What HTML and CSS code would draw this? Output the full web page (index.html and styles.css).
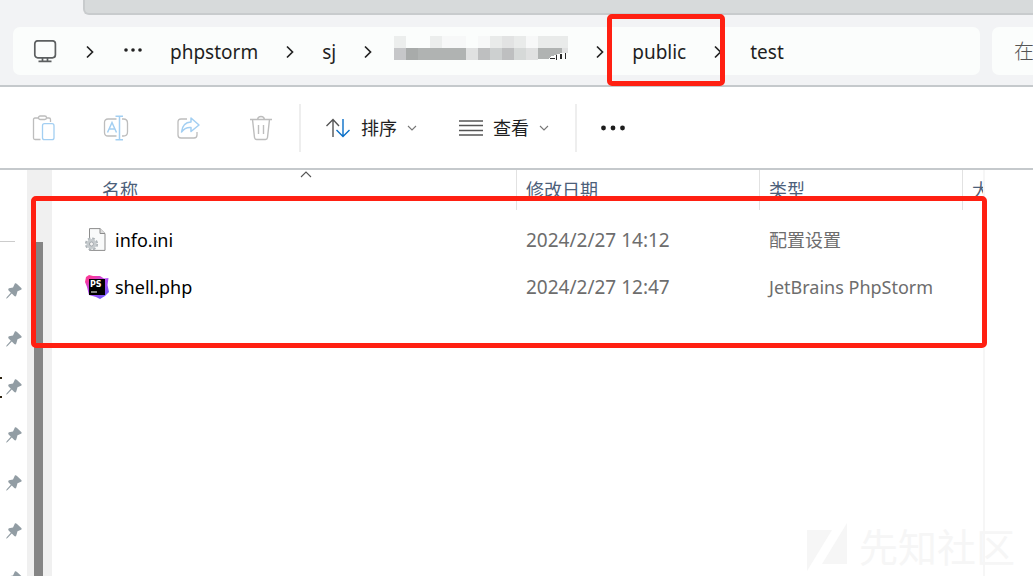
FILE: index.html
```html
<!DOCTYPE html>
<html lang="zh-CN">
<head>
<meta charset="utf-8">
<title>test</title>
<link rel="stylesheet" href="styles.css">
</head>
<body>
<svg class="defs" aria-hidden="true">
  <symbol id="next" viewBox="0 0 8 14"><path d="M1 1.5L6.5 7L1 12.5" fill="none" stroke="#222" stroke-width="1.7"/></symbol>
  <symbol id="down" viewBox="0 0 10 6"><path d="M1 1L5 5L9 1" fill="none" stroke="#777" stroke-width="1.1"/></symbol>
  <symbol id="pin" viewBox="0 0 16 16"><path d="M9 0.3Q10 0 11 1L15.5 5.2Q16 6.2 15 6.8L11.5 8.3L10.3 12.5Q9.6 14 8.3 13L5.8 10.6L1.5 15L0 15.8L0.7 14.2L4.8 9.8L2.4 7.2Q1.8 6 3 5.3L7 4.4Z" fill="#929da4"/></symbol>
</svg>
<div class="explorer">
  <div class="tabs"><div class="tab-strip"></div></div>
  <header class="address-row">
    <nav class="address" aria-label="地址">
      <button class="plain" aria-label="此电脑"><svg width="24" height="24" viewBox="0 0 24 24" fill="none" stroke="#5c5f60" stroke-width="1.7"><rect x="1.8" y="0.8" width="20.6" height="17" rx="3"/><path d="M9.5 18v3M14.5 18v3M5.5 21.3h13"/></svg></button>
      <svg class="next"><use href="#next"/></svg>
      <button class="plain" aria-label="更多路径"><svg width="20" height="20" viewBox="0 0 20 20" fill="#222"><circle cx="4" cy="8" r="1.8"/><circle cx="11" cy="8" r="1.8"/><circle cx="18" cy="8" r="1.8"/></svg></button>
      <a href="#">phpstorm</a>
      <svg class="next"><use href="#next"/></svg>
      <a href="#">sj</a>
      <svg class="next"><use href="#next"/></svg>
      <a href="#" class="hidden-name" aria-label="文件夹"><svg class="mosaic" width="174" height="24" viewBox="0 0 174 24" shape-rendering="crispEdges">
        <path d="M0 0h12v12H0zM36 0h12v12H36z" fill="#eceeed"/>
        <path d="M48 0h24v12H48zM84 0h12v12H84zM132 0h12v12h-12z" fill="#f7f8f8"/>
        <path d="M96 0h12v12H96zM120 0h12v12h-12zM144 0h30v12h-30z" fill="#e9ebea"/>
        <path d="M108 0h12v12h-12z" fill="#e2e3e3"/>
        <path d="M0 12h12v12H0z" fill="#c6c7c9"/>
        <path d="M12 12h12v12H12z" fill="#a8abaa"/>
        <path d="M24 12h48v12H24zM144 12h24v5l-10 3l-4 3h-10z" fill="#b0b3b2"/>
        <path d="M72 12h12v12H72zM132 12h12v12h-12zM168 12h6v5h-6z" fill="#e0e1e1"/>
        <path d="M84 12h12v12H84zM108 12h12v12h-12z" fill="#bebfc0"/>
        <path d="M96 12h12v12H96z" fill="#cdd0d0"/>
        <path d="M120 12h12v12h-12z" fill="#d6d9d8"/>
        <path d="M156 22h5v1h-5zM162 19h1v5h-1zM166 18h2v5h-2zM171 17h1v6h-1z" fill="#292929"/>
      </svg></a>
      <svg class="next"><use href="#next"/></svg>
      <a href="#">public</a>
      <svg class="next"><use href="#next"/></svg>
      <a href="#">test</a>
    </nav>
    <button class="search">在</button>
  </header>

  <div class="toolbar">
    <div class="group edit">
      <button class="plain" aria-label="粘贴"><svg width="24" height="26" viewBox="0 0 24 26" fill="none" stroke="#bdbdbd" stroke-width="1.3"><path d="M6.5 3H3Q1.5 3 1.5 4.5V23Q1.5 24.5 3 24.5H8.5M14.5 3H17Q18.5 3 18.5 4.5V7"/><rect x="6.5" y="1" width="8" height="3.5" rx="1.7"/><rect x="10.5" y="8.7" width="11.5" height="16" rx="2" stroke="#a3cff2"/></svg></button>
      <button class="plain" aria-label="重命名"><svg width="26" height="26" viewBox="0 0 26 26" fill="none" stroke="#bdbdbd" stroke-width="1.3"><path d="M13.5 4H5Q1.5 4 1.5 7.5V17.5Q1.5 21 5 21H13.5M19 4H20.5Q24.5 4 24.5 8V17Q24.5 21 20.5 21H19"/><path d="M4.5 17.5L9 7.5L13.5 17.5M6 14H12M16.5 1.5V24.5M12.5 1.3H20M12.5 24.7H20" stroke="#a3cff2" stroke-width="1.5"/></svg></button>
      <button class="plain" aria-label="共享"><svg width="26" height="26" viewBox="0 0 26 26" fill="none" stroke="#bdbdbd" stroke-width="1.3"><path d="M11 4H5Q2 4 2 7V20Q2 23 5 23H18Q21 23 21 20V17"/><path d="M15 3L23 10L15 16.5V12.5Q9 12 5.5 17Q6.5 7.5 15 7Z" stroke="#a3cff2" stroke-linejoin="round" stroke-width="1.5"/></svg></button>
      <button class="plain" aria-label="删除"><svg width="24" height="26" viewBox="0 0 24 26" fill="none" stroke="#bdbdbd" stroke-width="1.4"><path d="M1 4.5H23M8.5 4.5Q9 1.5 12 1.5T15.5 4.5M3.5 4.5L5.5 22.5Q5.8 24.5 7.5 24.5H16.5Q18.2 24.5 18.5 22.5L20.5 4.5M9.5 10V19M14.5 10V19"/></svg></button>
    </div>
    <div class="group menus">
      <button class="plain menu"><svg width="26" height="20" viewBox="0 0 26 20" fill="none" stroke-width="1.4"><path d="M8 19V1.5M1.5 8L8 1.5L14 8" stroke="#555"/><path d="M18 1V18.5M11.5 12L18 18.5L24.5 12" stroke="#0a6fc8"/></svg><span>排序</span><svg class="down"><use href="#down"/></svg></button>
      <button class="plain menu"><svg width="24" height="16" viewBox="0 0 24 16" stroke="#555" stroke-width="1.3"><path d="M0 1H24M0 5.5H24M0 10.5H24M0 15H24"/></svg><span>查看</span><svg class="down"><use href="#down"/></svg></button>
    </div>
    <button class="plain more" aria-label="查看更多"><svg width="24" height="6" viewBox="0 0 24 6" fill="#1d1d1d"><circle cx="2.5" cy="3" r="2.4"/><circle cx="12" cy="3" r="2.4"/><circle cx="21.5" cy="3" r="2.4"/></svg></button>
  </div>

  <main class="content">
    <ul class="pins">
      <li><svg><use href="#pin"/></svg></li>
      <li><svg><use href="#pin"/></svg></li>
      <li class="clipped"><svg><use href="#pin"/></svg></li>
      <li><svg><use href="#pin"/></svg></li>
      <li><svg><use href="#pin"/></svg></li>
      <li><svg><use href="#pin"/></svg></li>
      <li><svg><use href="#pin"/></svg></li>
    </ul>
    <div class="scrollbar"><div class="thumb"></div></div>
    <section class="files">
      <table>
        <colgroup><col class="c-name"><col class="c-date"><col class="c-type"><col class="c-size"></colgroup>
        <thead><tr>
          <th><div class="head name-head">名称<svg class="sort" width="12" height="7" viewBox="0 0 12 7"><path d="M1 6L6 1L11 6" fill="none" stroke="#555" stroke-width="1.1"/></svg></div></th>
          <th><div class="head">修改日期</div></th>
          <th><div class="head">类型</div></th>
          <th><div class="head last">大</div></th>
        </tr></thead>
        <tbody>
          <tr>
            <td class="name"><div class="file"><svg width="24" height="24" viewBox="0 0 24 24"><path d="M4.5 .6H15L20 5.5V22.4H4.5Z" fill="#f9fafa" stroke="#8d8d8d"/><path d="M15 .6V5.5H20" fill="#ddd" stroke="#8d8d8d"/><circle cx="6.5" cy="16" r="5.5" fill="none" stroke="#aeb4b8" stroke-width="2.2" stroke-dasharray="2.6 1.72"/><circle cx="6.5" cy="16" r="3.6" fill="none" stroke="#c6cbce" stroke-width="3"/><circle cx="6.5" cy="16" r="2" fill="#f3f3f3" stroke="#8d9499" stroke-width=".7"/></svg>info.ini</div></td>
            <td class="date">2024/2/27 14:12</td><td>配置设置</td><td></td>
          </tr>
          <tr>
            <td class="name"><div class="file"><svg width="24" height="24" viewBox="0 0 24 24"><defs><linearGradient id="ps" x1="0" y1="0" x2=".7" y2="1"><stop offset=".2" stop-color="#f83b9c"/><stop offset=".5" stop-color="#b848f2"/><stop offset="1" stop-color="#7459f8"/></linearGradient></defs><path d="M4 0L8 1L15 1L19 3.5L23.5 3L22.5 10L24 17L20 21L15 24L11 22L4 20L2 12L0 7L1 2Z" fill="url(#ps)"/><path d="M4 4H20V20H4Z"/><text x="5" y="12" class="ps-mark">PS</text><path d="M6 16.500H12V17.500H6Z" fill="#fff"/></svg>shell.php</div></td>
            <td class="date">2024/2/27 12:47</td><td>JetBrains PhpStorm</td><td></td>
          </tr>
        </tbody>
      </table>
    </section>
    <aside class="preview"></aside>
  </main>
  <div class="watermark"><svg width="40" height="48" viewBox="0 0 40 48" fill="#f6f6f6"><path d="M0 7H25L0 48ZM40 0V41H15Z"/></svg><span>先知社区</span></div>
  <div class="mark mark-path"></div>
  <div class="mark mark-files"></div>
</div>
</body>
</html>
```
FILE: styles.css
```css
* { box-sizing: border-box; }
body {
  margin: 0;
  font: 19px/26px "Noto Sans", "Noto Sans CJK SC", sans-serif;
  color: #1f1f1f;
  background: #fff;
}
.defs { position: absolute; width: 0; height: 0; }
svg { display: block; flex: none; }
.explorer {
  position: relative;
  display: flex;
  flex-direction: column;
  height: 100vh;
  overflow: hidden;
}
.plain { border: 0; padding: 0; background: none; font: inherit; color: inherit; }

.tabs { padding-left: 83px; background: #f2f3f5; }
.tab-strip {
  height: 15px;
  background: #d7dadb;
  border: solid #c8cbcd;
  border-width: 0 0 2px 2px;
  border-bottom-left-radius: 6px;
}
.address-row {
  display: flex;
  gap: 12px;
  padding: 12px 0 10px 13px;
  background: #f2f3f5;
  border-bottom: 2px solid #c5c9cc;
}
.address {
  flex: 1;
  display: flex;
  align-items: center;
  gap: 28px;
  height: 48px;
  padding: 2px 0 0 20px;
  background: #fbfdfc;
  border-radius: 7px;
  white-space: nowrap;
}
.address .plain:first-child { margin-right: 1px; }
.address a { color: inherit; text-decoration: none; }
.address .hidden-name { margin-left: -6px; }
.next { width: 8px; height: 14px; }
.mosaic { margin-top: -8px; }
.search {
  width: 41px;
  padding: 0 0 0 22px;
  border: 0;
  border-radius: 7px 0 0 7px;
  background: #fbfdfc;
  font: 300 20px/26px "Noto Sans CJK SC", sans-serif;
  color: #555;
  overflow: hidden;
  text-align: left;
  white-space: nowrap;
}

.toolbar {
  display: flex;
  align-items: center;
  height: 83px;
  border-bottom: 2px solid #c5c9cc;
  font-size: 18px;
}
.group { display: flex; align-items: center; height: 48px; border-right: 2px solid #eee; }
.edit { gap: 47px; padding: 0 26px 0 32px; }
.menus { gap: 42px; padding: 0 26px 0 24px; }
.menu { display: flex; align-items: center; gap: 10px; }
.down { width: 10px; height: 6px; }
.more { margin-left: 24px; }

.content { flex: 1; min-height: 0; display: flex; }
.pins {
  width: 27px;
  margin: 71px 0 0;
  padding: 26px 0 0;
  list-style: none;
  background: linear-gradient(#ccc, #ccc) 0 0 / 15px 1px no-repeat;
}
.pins li { display: flex; align-items: center; height: 48px; padding-left: 6px; }
.pins svg { width: 16px; height: 16px; }
.pins .clipped { padding-left: 0; gap: 4px; }
.clipped::before { content: ""; width: 2px; height: 17px; border: solid #2b2110; border-width: 2px 0; }
.scrollbar { width: 27px; padding: 72px 9px 0 7px; background: #f0f0f0; border-right: 2px solid #fff; }
.thumb { height: 100%; background: #858585; }
.files { flex: 1; min-width: 0; border-right: 2px solid #f6f6f6; overflow: hidden; }
.preview { width: 48px; }
table { width: 100%; border-collapse: collapse; table-layout: fixed; }
.c-name { width: 463px; }
.c-date { width: 243px; }
.c-type { width: 203px; }
th { height: 46px; padding: 0; vertical-align: top; font-weight: 400; text-align: left; font-size: 18px; }
.head {
  position: relative;
  height: 40px;
  padding: 7px 0 0 9px;
  border-right: 1px solid #e2e2e2;
  color: #4c607a;
  overflow: hidden;
  white-space: nowrap;
}
.name-head { padding-left: 48px; }
.last { border: 0; }
.sort { position: absolute; left: 246px; top: 1px; }
td { height: 47px; padding: 0 0 0 9px; color: #6d6d6d; font-size: 18px; white-space: nowrap; }
td.date { font-size: 19px; }
td.name { padding-left: 31px; color: #000; }
.file { display: flex; align-items: center; gap: 6px; }
.ps-mark { font: 700 8px "DejaVu Sans", sans-serif; fill: #fff; }

.watermark {
  position: absolute;
  right: 18px;
  bottom: 5px;
  display: flex;
  align-items: flex-start;
  gap: 12px;
  font: 39px/44px "Noto Sans CJK SC", sans-serif;
  color: #f6f6f6;
}
.mark { position: absolute; border: 5px solid #ff2012; border-radius: 5px; }
.mark-path { left: 607px; top: 14px; width: 118px; height: 72px; }
.mark-files { left: 31px; right: 46px; top: 196px; height: 152px; }
```
